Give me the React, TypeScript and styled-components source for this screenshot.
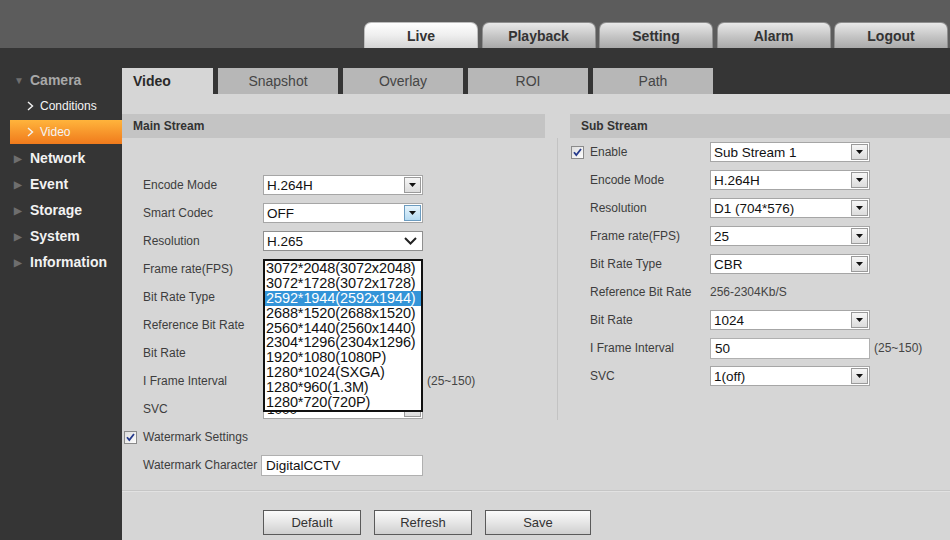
import React from "react";
import styled, { createGlobalStyle, css } from "styled-components";

const GlobalStyle = createGlobalStyle`
  html, body {
    margin: 0;
    padding: 0;
    background: #353535;
    font-family: "Liberation Sans", Arial, sans-serif;
  }
  * {
    box-sizing: border-box;
  }
`;

const topTabs = ["Live", "Playback", "Setting", "Alarm", "Logout"];
const subTabs = ["Video", "Snapshot", "Overlay", "ROI", "Path"];
const menu = ["Network", "Event", "Storage", "System", "Information"];
const resolutions = [
  "3072*2048(3072x2048)",
  "3072*1728(3072x1728)",
  "2592*1944(2592x1944)",
  "2688*1520(2688x1520)",
  "2560*1440(2560x1440)",
  "2304*1296(2304x1296)",
  "1920*1080(1080P)",
  "1280*1024(SXGA)",
  "1280*960(1.3M)",
  "1280*720(720P)",
];

const ArrowDown = () => (
  <svg width="7" height="4" viewBox="0 0 7 4">
    <polygon points="0,0 7,0 3.5,4" fill="#111" />
  </svg>
);

const Check = () => (
  <svg width="13" height="13" viewBox="0 0 13 13">
    <defs>
      <linearGradient id="cb" x1="0" y1="0" x2="1" y2="1">
        <stop offset="0" stopColor="#dcdcdc" />
        <stop offset="1" stopColor="#ffffff" />
      </linearGradient>
    </defs>
    <rect x="0.5" y="0.5" width="12" height="12" fill="url(#cb)" stroke="#8a8a8a" />
    <path d="M3 6.2 L5.3 9 L10 3" fill="none" stroke="#253a8c" strokeWidth="1.8" />
  </svg>
);

const Chevron = () => (
  <svg width="7" height="10" viewBox="0 0 7 10">
    <path d="M1 1 L5.5 5 L1 9" fill="none" stroke="#f2f2f2" strokeWidth="1.4" />
  </svg>
);

const Select = ({ value, hover }: { value: string; hover?: boolean }) => (
  <SelectBox>
    <SelectValue>{value}</SelectValue>
    <DropBtn $hover={hover}>
      <ArrowDown />
    </DropBtn>
  </SelectBox>
);

export default function App() {
  return (
    <Page>
      <GlobalStyle />
      <Header>
        {topTabs.map((t) => (
          <TopTab key={t} $active={t === "Live"}>
            {t}
          </TopTab>
        ))}
      </Header>
      <Body>
        <Sidebar>
          <NavHead $muted>
            <Tri>▼</Tri>Camera
          </NavHead>
          <SubItem>
            <Chev>
              <Chevron />
            </Chev>
            Conditions
          </SubItem>
          <SubItem $active>
            <Chev>
              <Chevron />
            </Chev>
            Video
          </SubItem>
          {menu.map((m) => (
            <NavHead key={m}>
              <Tri>▶</Tri>
              {m}
            </NavHead>
          ))}
        </Sidebar>
        <Main>
          <SubTabBar>
            {subTabs.map((t) => (
              <SubTab key={t} $active={t === "Video"}>
                {t}
              </SubTab>
            ))}
          </SubTabBar>
          <Content>
            <Columns>
              <LeftCol>
                <SectionTitle>Main Stream</SectionTitle>
                <Rows $top={33}>
                  <Row $pad={21}>
                    <Label>Encode Mode</Label>
                    <Select value="H.264H" />
                  </Row>
                  <Row $pad={21}>
                    <Label>Smart Codec</Label>
                    <Select value="OFF" hover />
                  </Row>
                  <Row $pad={21}>
                    <Label>Resolution</Label>
                    <Field>
                      <NativeSelect>
                        <SelectValue>H.265</SelectValue>
                        <svg width="13" height="8" viewBox="0 0 13 8">
                          <path d="M1 1 L6.5 6.5 L12 1" fill="none" stroke="#222" strokeWidth="2" />
                        </svg>
                      </NativeSelect>
                      <DropList>
                        {resolutions.map((r) => (
                          <DropItem key={r} $selected={r.startsWith("2592")}>
                            {r}
                          </DropItem>
                        ))}
                      </DropList>
                    </Field>
                  </Row>
                  <Row $pad={21}>
                    <Label>Frame rate(FPS)</Label>
                    <Select value="25" />
                  </Row>
                  <Row $pad={21}>
                    <Label>Bit Rate Type</Label>
                    <Select value="CBR" />
                  </Row>
                  <Row $pad={21}>
                    <Label>Reference Bit Rate</Label>
                    <Value>1792-10240Kb/S</Value>
                  </Row>
                  <Row $pad={21}>
                    <Label>Bit Rate</Label>
                    <Select value="4096" />
                  </Row>
                  <Row $pad={21}>
                    <Label>I Frame Interval</Label>
                    <InputWrap>
                      <TextInput>50</TextInput>
                      <Hint>(25~150)</Hint>
                    </InputWrap>
                  </Row>
                  <Row $pad={21}>
                    <Label>SVC</Label>
                    <Select value="1000" />
                  </Row>
                  <CheckRow $pad={2}>
                    <Check />
                    <Label>Watermark Settings</Label>
                  </CheckRow>
                  <Row $pad={21}>
                    <Label>Watermark Character</Label>
                    <TextInput $shift={-2}>DigitalCCTV</TextInput>
                  </Row>
                </Rows>
              </LeftCol>
              <RightCol>
                <SectionTitle $indent>Sub Stream</SectionTitle>
                <SubRows>
                  <CheckRow $pad={13}>
                    <Check />
                    <Label $w={114}>Enable</Label>
                    <Select value="Sub Stream 1" />
                  </CheckRow>
                  <Row $pad={32}>
                    <Label>Encode Mode</Label>
                    <Select value="H.264H" />
                  </Row>
                  <Row $pad={32}>
                    <Label>Resolution</Label>
                    <Select value="D1 (704*576)" />
                  </Row>
                  <Row $pad={32}>
                    <Label>Frame rate(FPS)</Label>
                    <Select value="25" />
                  </Row>
                  <Row $pad={32}>
                    <Label>Bit Rate Type</Label>
                    <Select value="CBR" />
                  </Row>
                  <Row $pad={32}>
                    <Label>Reference Bit Rate</Label>
                    <Value>256-2304Kb/S</Value>
                  </Row>
                  <Row $pad={32}>
                    <Label>Bit Rate</Label>
                    <Select value="1024" />
                  </Row>
                  <Row $pad={32}>
                    <Label>I Frame Interval</Label>
                    <InputWrap>
                      <TextInput>50</TextInput>
                      <Hint>(25~150)</Hint>
                    </InputWrap>
                  </Row>
                  <Row $pad={32}>
                    <Label>SVC</Label>
                    <Select value="1(off)" />
                  </Row>
                </SubRows>
              </RightCol>
            </Columns>
            <Footer>
              <Button $w={98}>Default</Button>
              <Button $w={98}>Refresh</Button>
              <Button $w={106}>Save</Button>
            </Footer>
          </Content>
        </Main>
      </Body>
    </Page>
  );
}

const Page = styled.div`
  width: 950px;
  height: 540px;
  overflow: hidden;
  display: flex;
  flex-direction: column;
  background: #353535;
`;

const Header = styled.div`
  height: 48px;
  flex: none;
  background: #5c5c5c;
  display: flex;
  justify-content: flex-end;
  align-items: flex-end;
  gap: 3.5px;
  padding-right: 2px;
`;

const TopTab = styled.div<{ $active?: boolean }>`
  width: 114px;
  height: 26px;
  border-radius: 7px 7px 0 0;
  border: 1px solid #8e8e8e;
  border-bottom: none;
  display: flex;
  align-items: center;
  justify-content: center;
  padding-top: 1px;
  font-size: 14px;
  font-weight: bold;
  color: #333;
  background: linear-gradient(#e8e8e8, #c4c4c4 55%, #a9a9a9);
  ${({ $active }) =>
    $active &&
    css`
      background: linear-gradient(#ffffff, #eeeeee 50%, #d4d4d4);
      border-color: #bdbdbd;
    `}
`;

const Body = styled.div`
  flex: 1;
  display: flex;
  min-height: 0;
`;

const Sidebar = styled.nav`
  width: 122px;
  flex: none;
  padding-top: 19px;
  display: flex;
  flex-direction: column;
`;

const NavHead = styled.div<{ $muted?: boolean }>`
  height: 26px;
  display: flex;
  align-items: center;
  padding-left: 14px;
  font-size: 14px;
  font-weight: bold;
  color: ${({ $muted }) => ($muted ? "#a8a8a8" : "#f2f2f2")};
`;

const Tri = styled.span`
  width: 16px;
  font-size: 10px;
  color: #6e6e6e;
`;

const SubItem = styled.div<{ $active?: boolean }>`
  height: 26px;
  margin-left: 10px;
  padding-left: 17px;
  display: flex;
  align-items: center;
  font-size: 12px;
  color: #f4f4f4;
  ${({ $active }) =>
    $active &&
    css`
      height: 24px;
      margin: 1px 0 1px 10px;
      background: linear-gradient(#ffb43c, #f07a1c);
    `}
`;

const Chev = styled.span`
  width: 13px;
  display: flex;
  align-items: center;
`;

const Main = styled.main`
  flex: 1;
  display: flex;
  flex-direction: column;
  min-width: 0;
`;

const SubTabBar = styled.div`
  height: 46px;
  flex: none;
  display: flex;
  align-items: flex-end;
  gap: 5px;
`;

const SubTab = styled.div<{ $active?: boolean }>`
  width: 120px;
  height: 26px;
  display: flex;
  align-items: center;
  justify-content: center;
  font-size: 14px;
  color: #454545;
  background: #b7b7b7;
  ${({ $active }) =>
    $active &&
    css`
      width: 91px;
      justify-content: flex-start;
      padding-left: 11px;
      font-weight: bold;
      color: #2a2a2a;
      background: #d6d6d6;
    `}
`;

const Content = styled.section`
  flex: 1;
  background: #d6d6d6;
  padding-top: 20px;
  display: flex;
  flex-direction: column;
`;

const Columns = styled.div`
  display: flex;
`;

const LeftCol = styled.div`
  width: 423px;
  flex: none;
`;

const RightCol = styled.div`
  flex: 1;
  margin-left: 12px;
`;

const SectionTitle = styled.div<{ $indent?: boolean }>`
  height: 24px;
  background: #c4c4c4;
  display: flex;
  align-items: center;
  padding-left: 11px;
  margin-left: ${({ $indent }) => ($indent ? "13px" : "0")};
  font-size: 12px;
  font-weight: bold;
  color: #333;
`;

const Rows = styled.div<{ $top: number }>`
  padding-top: ${({ $top }) => $top}px;
`;

const SubRows = styled.div`
  border-left: 1px solid #c3c3c3;
  padding-bottom: 30px;
`;

const Row = styled.div<{ $pad: number }>`
  height: 28px;
  display: flex;
  align-items: center;
  padding-left: ${({ $pad }) => $pad}px;
`;

const CheckRow = styled(Row)`
  gap: 6px;
`;

const Label = styled.div<{ $w?: number }>`
  width: ${({ $w }) => $w ?? 120}px;
  flex: none;
  font-size: 12px;
  color: #3d3d3d;
  white-space: nowrap;
`;

const Value = styled.div`
  font-size: 12px;
  color: #444;
`;

const Field = styled.div`
  position: relative;
`;

const SelectBox = styled.div`
  width: 160px;
  height: 20px;
  background: #fff;
  border: 1px solid #a6a6a6;
  display: flex;
  align-items: center;
  padding: 0 1px 0 0;
`;

const SelectValue = styled.span`
  flex: 1;
  padding-left: 3px;
  font-size: 13.5px;
  color: #111;
  white-space: nowrap;
  overflow: hidden;
`;

const DropBtn = styled.div<{ $hover?: boolean }>`
  width: 17px;
  height: 16px;
  border: 1px solid #9a9a9a;
  display: flex;
  align-items: center;
  justify-content: center;
  background: linear-gradient(#f6f6f6, #dcdcdc);
  ${({ $hover }) =>
    $hover &&
    css`
      border-color: #6c9cc0;
      background: linear-gradient(#e6f4fc, #b6dbf2);
    `}
`;

const NativeSelect = styled(SelectBox)`
  padding-right: 5px;
  border-color: #8f8f8f;
`;

const DropList = styled.ul`
  position: absolute;
  top: 28px;
  left: 0;
  width: 160px;
  margin: 0;
  padding: 0;
  list-style: none;
  background: #fff;
  border: 2px solid #111;
  z-index: 5;
`;

const DropItem = styled.li<{ $selected?: boolean }>`
  height: 14.9px;
  line-height: 15px;
  padding-left: 1px;
  font-size: 14.5px;
  letter-spacing: -0.1px;
  color: #111;
  white-space: nowrap;
  ${({ $selected }) =>
    $selected &&
    css`
      background: #3394d8;
      color: #fff;
    `}
`;

const InputWrap = styled.div`
  display: flex;
  align-items: center;
  gap: 4px;
`;

const TextInput = styled.div<{ $shift?: number }>`
  width: ${({ $shift }) => 160 - ($shift ?? 0)}px;
  margin-left: ${({ $shift }) => $shift ?? 0}px;
  height: 21px;
  background: #fff;
  border: 1px solid #b0b0b0;
  padding-left: 4px;
  display: flex;
  align-items: center;
  font-size: 13.5px;
  color: #111;
`;

const Hint = styled.span`
  font-size: 12px;
  color: #444;
`;

const Footer = styled.div`
  margin-top: 11px;
  border-top: 1px solid #c6c6c6;
  box-shadow: inset 0 1px 0 #e2e2e2;
  padding: 19px 0 0 141px;
  display: flex;
  gap: 13px;
`;

const Button = styled.button<{ $w: number }>`
  width: ${({ $w }) => $w}px;
  height: 25px;
  border: 1px solid #5a5a5a;
  background: linear-gradient(#fbfbfb, #e6e6e6 50%, #cfcfcf);
  font-family: "Liberation Sans", Arial, sans-serif;
  font-size: 13px;
  color: #333;
  padding: 0;
`;
